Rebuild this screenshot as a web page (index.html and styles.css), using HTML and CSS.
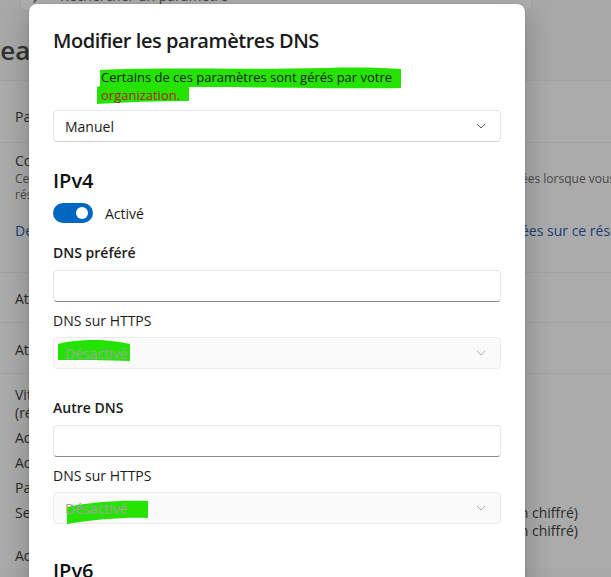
FILE: index.html
```html
<!DOCTYPE html>
<html lang="fr">
<head>
<meta charset="utf-8">
<title>Modifier les paramètres DNS</title>
<link rel="stylesheet" href="styles.css">
</head>
<body>
<div class="page">
  <div class="search">
    <svg class="search-icon" width="14" height="14" viewBox="0 0 14 14"><circle cx="8.5" cy="5.5" r="4.5" fill="none" stroke="#3a3a3a" stroke-width="1.2"/><path d="M5.2 8.8 L1 13" stroke="#3a3a3a" stroke-width="1.3" stroke-linecap="round"/></svg>
    <span>Rechercher un paramètre</span>
  </div>
  <h1 class="page-title">Réseau</h1>

  <section class="card card-ip">
    <div class="row-title">Paramètres IP</div>
  </section>

  <section class="card card-metered">
    <div class="row-title">Connexion limitée</div>
    <div class="split desc">
      <span class="clip">Certaines applications peuvent fonctionner différemment pour réduire les données utilis</span>
      <span class="tail">ées lorsque vous êtes connecté à ce réseau</span>
    </div>
    <div class="desc">réseau</div>
    <div class="split link">
      <span class="clip">Définir une limite de données pour contrôler l'utilisation des données utilis</span>
      <span class="tail">ées sur ce réseau</span>
    </div>
  </section>

  <section class="card card-single">
    <div class="row-title">Attribution d'adresse IP :</div>
  </section>

  <section class="card card-single2">
    <div class="row-title">Attribution du serveur DNS :</div>
  </section>

  <section class="card card-props">
    <div class="prop"><span>Vitesse de liaison<br>(réception/transmission) :</span><span class="val"></span></div>
    <div class="prop"><span>Adresse IPv6 locale du lien :</span><span class="val"></span></div>
    <div class="prop"><span>Adresse IPv4 :</span><span class="val"></span></div>
    <div class="prop"><span>Passerelle IPv4 par défaut :</span><span class="val"></span></div>
    <div class="prop"><span>Serveurs DNS IPv4 :</span><span class="val">192.168.1.1 (non chiffré)<br>192.168.1.2 (non chiffré)</span></div>
    <div class="prop"><span>Adresse physique (MAC) :</span><span class="val"></span></div>
  </section>
</div>

<div class="dialog">
  <h2 class="dialog-title">Modifier les paramètres DNS</h2>
  <p class="notice">
    <svg class="mark mark-notice" width="305" height="38" viewBox="0 0 305 38"><path d="M3,3 C60,0 150,3 230,1 C260,0 290,1 304,2 L304,21 C250,22 150,20 92,20 L92,34 C60,34 30,35 0,37 L0,20 L3,19 Z"/></svg>
    Certains de ces paramètres sont gérés par votre<br><span class="err">organization.</span>
  </p>
  <div class="select">
    <span>Manuel</span>
    <svg class="chev" width="10" height="6" viewBox="0 0 10 6"><path d="M1 1 L5 5 L9 1"/></svg>
  </div>

  <h3 class="section-title">IPv4</h3>
  <div class="toggle-row">
    <span class="toggle"><span class="knob"></span></span>
    <span>Activé</span>
  </div>

  <div class="field-label first">DNS préféré</div>
  <div class="textbox"></div>
  <div class="sub-label">DNS sur HTTPS</div>
  <div class="select disabled">
    <span class="hl">
      <svg class="mark mark-a" width="73" height="22" viewBox="0 0 73 22"><path d="M0,4 C10,1 25,0 35,0 C50,0 62,2 72,4 L72,21 C50,20 20,20 0,20 Z"/></svg>
      Désactivé
    </span>
    <svg class="chev" width="10" height="6" viewBox="0 0 10 6"><path d="M1 1 L5 5 L9 1"/></svg>
  </div>

  <div class="field-label second">Autre DNS</div>
  <div class="textbox"></div>
  <div class="sub-label">DNS sur HTTPS</div>
  <div class="select disabled">
    <span class="hl">
      <svg class="mark mark-b" width="83" height="25" viewBox="0 0 83 25"><path d="M1,7 C20,3 50,0 82,1 L82,18 C60,17 30,19 1,24 Z"/></svg>
      Désactivé
    </span>
    <svg class="chev" width="10" height="6" viewBox="0 0 10 6"><path d="M1 1 L5 5 L9 1"/></svg>
  </div>

  <h3 class="section-title v6">IPv6</h3>
</div>
</body>
</html>
```

FILE: styles.css
```css
* { box-sizing: border-box; }
html, body { margin: 0; padding: 0; }
body {
  width: 611px;
  height: 577px;
  overflow: hidden;
  position: relative;
  background: #a8a8a8;
  font-family: "Open Sans", "Noto Sans", "DejaVu Sans", sans-serif;
  font-size: 14px;
  color: #1c1c1c;
}

/* ---------- backdrop settings page ---------- */
.page { color: #2a2a2a; }
.search {
  margin: -20px 79px 0 20px;
  height: 31px;
  border-radius: 5px;
  background: #afafaf;
  border: 1px solid #a2a2a2;
  display: flex;
  align-items: center;
  gap: 13px;
  padding-left: 12px;
  color: #404040;
  font-size: 14px;
  white-space: nowrap;
}
.page-title {
  margin: 21px 0 12px;
  font-size: 26px;
  line-height: 36px;
  font-weight: 600;
  text-indent: -44px;
  color: #333;
  white-space: nowrap;
}
.card {
  background: #ababab;
  border-bottom: 1px solid #a1a1a1;
  padding-left: 15px;
}
.card-ip { border-top: 1px solid #a1a1a1; height: 63px; padding-top: 26px; }
.card-metered { padding-top: 8px; padding-bottom: 31px; }
.card-single { padding-top: 16px; padding-bottom: 13px; }
.card-single2 { padding-top: 17px; padding-bottom: 13px; }
.card-props { padding-top: 8px; border-bottom: 0; }
.row-title { line-height: 20px; white-space: nowrap; }
.desc { font-size: 12px; line-height: 16px; color: #474747; white-space: nowrap; }
.split { display: grid; grid-template-columns: 506px 1fr; white-space: nowrap; }
.clip { overflow: hidden; }
.tail { overflow: hidden; }
.link { margin-top: 18px; font-size: 14px; line-height: 20px; color: #183d78; }
.prop {
  display: grid;
  grid-template-columns: 1fr auto;
  line-height: 18px;
  padding: 3.5px 33px 3.5px 0;
  white-space: nowrap;
}
.prop .val { text-align: right; color: #2a2a2a; }

/* ---------- dialog ---------- */
.dialog {
  position: absolute;
  left: 29px;
  top: 4px;
  width: 496px;
  height: 640px;
  background: #fff;
  border-radius: 8px;
  padding: 23px 24px 0;
  box-shadow: 0 0 0 1px rgba(0,0,0,0.05), 0 8px 28px rgba(0,0,0,0.24);
  z-index: 1;
}
.dialog-title {
  margin: 0;
  font-size: 20px;
  line-height: 28px;
  font-weight: 600;
  color: #1b1b1b;
  letter-spacing: -0.45px;
}
.notice {
  position: relative;
  z-index: 0;
  margin: 13px 0 0 48px;
  font-size: 13px;
  line-height: 18px;
  color: #1a1a1a;
}
.notice .err { color: #b11a16; }
.mark { position: absolute; z-index: -1; }
.mark path { fill: #25e300; }
.mark-notice { left: -4px; top: -1px; }
.hl { position: relative; z-index: 0; }
.mark-a { left: -7px; top: -4px; }
.mark-b { left: 1px; top: 1px; }

.select {
  height: 32px;
  border: 1px solid #e6e6e6;
  border-bottom-color: #d4d4d4;
  border-radius: 4px;
  background: #fff;
  display: flex;
  align-items: center;
  justify-content: space-between;
  padding: 0 14px 0 11px;
  margin-top: 6px;
  color: #1b1b1b;
}
.select.disabled {
  background: #fafafa;
  border-color: #ececec;
  color: #a3a3a3;
  margin-top: 6px;
}
.chev path { fill: none; stroke: #5c5c5c; stroke-width: 1; }
.select.disabled .chev path { stroke: #acacac; }

.section-title {
  margin: 25px 0 0;
  font-size: 20px;
  line-height: 28px;
  font-weight: 600;
  color: #111;
}
.section-title.v6 { margin-top: 33px; }
.toggle-row {
  display: flex;
  align-items: center;
  gap: 12px;
  margin-top: 8px;
  height: 20px;
}
.toggle {
  width: 40px;
  height: 20px;
  border-radius: 10px;
  background: #0067c0;
  display: flex;
  align-items: center;
  justify-content: flex-end;
  padding-right: 5px;
}
.knob { width: 12px; height: 12px; border-radius: 50%; background: #fff; }

.field-label {
  font-weight: 600;
  line-height: 20px;
  color: #1b1b1b;
}
.field-label.first { margin-top: 20px; }
.field-label.second { margin-top: 29px; }
.textbox {
  margin-top: 7px;
  height: 32px;
  border: 1px solid #e6e6e6;
  border-bottom-color: #8a8a8a;
  border-radius: 4px;
  background: #fff;
}
.sub-label { margin-top: 9px; line-height: 20px; color: #1b1b1b; }
```
